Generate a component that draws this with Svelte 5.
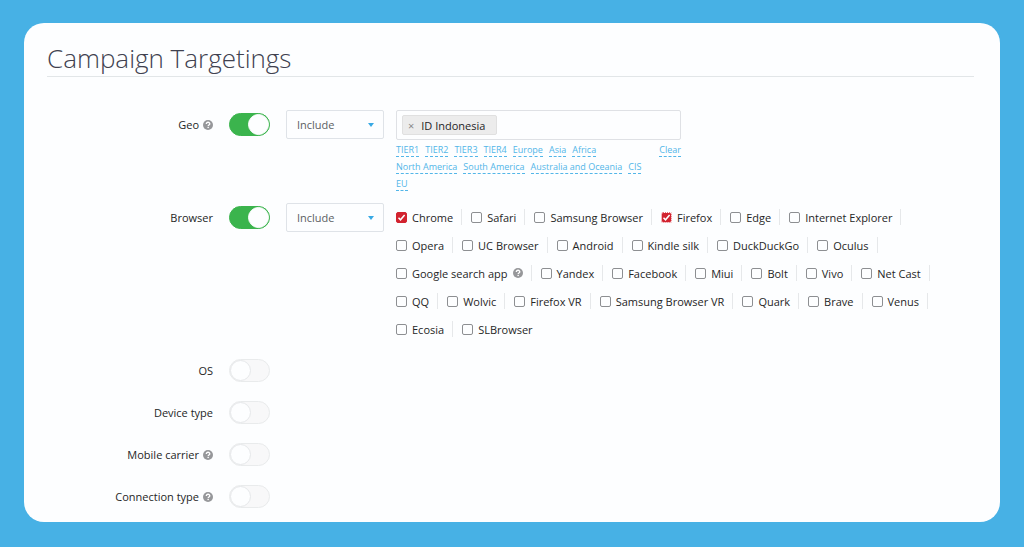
<script lang="ts">
	type Browser = { name: string; checked?: boolean; focused?: boolean; help?: boolean };

	let geo_on = $state(true);
	let browser_on = $state(true);
	let geo_mode = $state('Include');
	let browser_mode = $state('Include');
	let countries = $state(['ID Indonesia']);

	const regions = [
		'TIER1',
		'TIER2',
		'TIER3',
		'TIER4',
		'Europe',
		'Asia',
		'Africa',
		'North America',
		'South America',
		'Australia and Oceania',
		'CIS',
		'EU',
	];

	let browsers = $state<Browser[]>([
		{ name: 'Chrome', checked: true },
		{ name: 'Safari' },
		{ name: 'Samsung Browser' },
		{ name: 'Firefox', checked: true, focused: true },
		{ name: 'Edge' },
		{ name: 'Internet Explorer' },
		{ name: 'Opera' },
		{ name: 'UC Browser' },
		{ name: 'Android' },
		{ name: 'Kindle silk' },
		{ name: 'DuckDuckGo' },
		{ name: 'Oculus' },
		{ name: 'Google search app', help: true },
		{ name: 'Yandex' },
		{ name: 'Facebook' },
		{ name: 'Miui' },
		{ name: 'Bolt' },
		{ name: 'Vivo' },
		{ name: 'Net Cast' },
		{ name: 'QQ' },
		{ name: 'Wolvic' },
		{ name: 'Firefox VR' },
		{ name: 'Samsung Browser VR' },
		{ name: 'Quark' },
		{ name: 'Brave' },
		{ name: 'Venus' },
		{ name: 'Ecosia' },
		{ name: 'SLBrowser' },
	]);

	let others = $state([
		{ id: 'os', label: 'OS', help: false, on: false },
		{ id: 'device', label: 'Device type', help: false, on: false },
		{ id: 'carrier', label: 'Mobile carrier', help: true, on: false },
		{ id: 'connection', label: 'Connection type', help: true, on: false },
	]);

	function remove_country(country: string) {
		countries = countries.filter((c) => c !== country);
	}
</script>

{#snippet help_icon()}
	<svg class="help" viewBox="0 0 20 20" aria-hidden="true">
		<circle cx="10" cy="10" r="10" fill="#96979a" />
		<path
			d="M6.6 7.8C6.6 5.6 8.1 4.5 10.1 4.5c2 0 3.5 1.1 3.5 3 0 2.4-3.3 2.5-3.3 4.7"
			fill="none"
			stroke="#fff"
			stroke-width="2.6"
		/>
		<rect x="8.9" y="13.6" width="2.8" height="2.6" fill="#fff" />
	</svg>
{/snippet}

<main class="card">
	<h1>Campaign Targetings</h1>

	<div class="row">
		<label class="row-label" for="geo">Geo {@render help_icon()}</label>
		<input id="geo" class="toggle" type="checkbox" role="switch" bind:checked={geo_on} />
		<select class="mode" aria-label="Geo mode" bind:value={geo_mode}>
			<option>Include</option>
			<option>Exclude</option>
		</select>
		<div class="geo">
			<div class="tags">
				{#each countries as country (country)}
					<span class="tag">
						<button aria-label="Remove {country}" onclick={() => remove_country(country)}>×</button>
						{country}
					</span>
				{/each}
				<input class="tag-input" type="text" aria-label="Add country" />
			</div>
			<div class="shortcuts">
				<div class="regions">
					{#each regions as region (region)}
						<a href="#{region}">{region}</a>
					{/each}
				</div>
				<a href="#clear">Clear</a>
			</div>
		</div>
	</div>

	<div class="row browser-row">
		<label class="row-label" for="browser">Browser</label>
		<input id="browser" class="toggle" type="checkbox" role="switch" bind:checked={browser_on} />
		<select class="mode" aria-label="Browser mode" bind:value={browser_mode}>
			<option>Include</option>
			<option>Exclude</option>
		</select>
		<div class="browsers">
			{#each browsers as browser (browser.name)}
				<label class="browser">
					<input
						class="check"
						class:focused={browser.focused}
						type="checkbox"
						bind:checked={browser.checked}
					/>
					{browser.name}
					{#if browser.help}{@render help_icon()}{/if}
				</label>
			{/each}
		</div>
	</div>

	{#each others as other (other.id)}
		<div class="row off-row">
			<label class="row-label" for={other.id}>
				{other.label}
				{#if other.help}{@render help_icon()}{/if}
			</label>
			<input id={other.id} class="toggle" type="checkbox" role="switch" bind:checked={other.on} />
		</div>
	{/each}
</main>

<style>
	:global(body) {
		background: #47b1e5;
		font-family: 'Open Sans', sans-serif;
		font-size: 11px;
		color: #262626;
	}

	.card {
		box-sizing: border-box;
		margin: 23px 24px 24px;
		padding: 18px 26px 11px 23px;
		background: #fdfeff;
		border-radius: 20px;
	}

	h1 {
		margin: 0 0 33px;
		font-size: 26px;
		line-height: 35px;
		font-weight: 300;
		color: #40414f;
		border-bottom: 1px solid #e2e6e8;
	}

	.row {
		display: grid;
		grid-template-columns: 166px 41px 98px 1fr;
		column-gap: 16px;
		align-items: start;
	}

	.row-label {
		display: flex;
		align-items: center;
		justify-content: flex-end;
		gap: 4px;
		height: 29px;
	}

	.help {
		width: 10px;
		height: 10px;
		flex: none;
	}

	.toggle {
		appearance: none;
		box-sizing: border-box;
		display: flex;
		width: 41px;
		height: 23px;
		margin: 3px 0;
		padding: 0;
		background: #f8f8f9;
		border: 1px solid #e9ebec;
		border-radius: 12px;
	}

	.toggle::before {
		content: '';
		box-sizing: border-box;
		width: 21px;
		height: 21px;
		background: #fdfeff;
		border: 1px solid #e6e8ea;
		border-radius: 50%;
	}

	.toggle:checked {
		justify-content: flex-end;
		background: #3bb44d;
		border-color: #3bb44d;
	}

	.toggle:checked::before {
		border-color: #fdfeff;
	}

	.mode {
		appearance: none;
		box-sizing: border-box;
		width: 98px;
		height: 29px;
		padding: 0 10px;
		font: inherit;
		color: #5c5f63;
		border: 1px solid #dfe3e8;
		border-radius: 2px;
		background: #fdfeff
			url("data:image/svg+xml,%3Csvg xmlns='http://www.w3.org/2000/svg' viewBox='0 0 6 4'%3E%3Cpath d='M0 0h6L3 4z' fill='%2338a9e4'/%3E%3C/svg%3E")
			no-repeat right 9px center / 6px 4px;
	}

	.geo {
		width: 285px;
		margin-left: -4px;
	}

	.tags {
		box-sizing: border-box;
		display: flex;
		align-items: center;
		height: 30px;
		padding: 0 5px;
		border: 1px solid #dfe1e5;
		border-radius: 2px;
	}

	.tag {
		display: flex;
		align-items: center;
		box-sizing: border-box;
		height: 20px;
		padding: 0 11px 0 5px;
		gap: 7px;
		background: #ececec;
		border: 1px solid #e0e0e0;
		border-radius: 2px;
		white-space: nowrap;
	}

	.tag button {
		padding: 0;
		border: none;
		background: none;
		font: inherit;
		color: #888;
		cursor: pointer;
	}

	.tag-input {
		flex: 1;
		min-width: 0;
		border: none;
		outline: none;
		background: none;
		font: inherit;
	}

	.shortcuts {
		display: flex;
		justify-content: space-between;
		align-items: flex-start;
		padding-top: 4px;
		font-size: 9px;
		line-height: 12px;
	}

	.regions {
		display: flex;
		flex-wrap: wrap;
		gap: 4px 6px;
		width: 250px;
	}

	.shortcuts a {
		color: #53b6e8;
		text-decoration: none;
		border-bottom: 1px dashed #53b6e8;
	}

	.browser-row {
		margin-top: 12px;
	}

	.browsers {
		display: flex;
		flex-wrap: wrap;
		column-gap: 9px;
		max-width: 558px;
		margin-left: -4px;
	}

	.browser {
		display: flex;
		align-items: center;
		height: 16px;
		margin: 6px 0;
		gap: 5px;
		padding-right: 8px;
		border-right: 1px solid #e6e8ea;
		white-space: nowrap;
	}

	.browser:last-child {
		border-right-color: transparent;
	}

	.check {
		appearance: none;
		box-sizing: border-box;
		width: 11px;
		height: 11px;
		margin: 0;
		border: 1px solid #8d8f92;
		border-radius: 2px;
		background: #fdfeff;
	}

	.check:checked {
		border-color: #d2232f;
		background: #d2232f
			url("data:image/svg+xml,%3Csvg xmlns='http://www.w3.org/2000/svg' viewBox='0 0 9 9'%3E%3Cpath d='M1.5 4.8l2 2L7.6 2' fill='none' stroke='%23fff' stroke-width='1.5'/%3E%3C/svg%3E")
			no-repeat center / 9px 9px;
	}

	.check.focused:checked {
		border: 1px dotted #e8707a;
		background-clip: padding-box;
	}

	.off-row {
		margin-top: 13px;
	}
</style>
